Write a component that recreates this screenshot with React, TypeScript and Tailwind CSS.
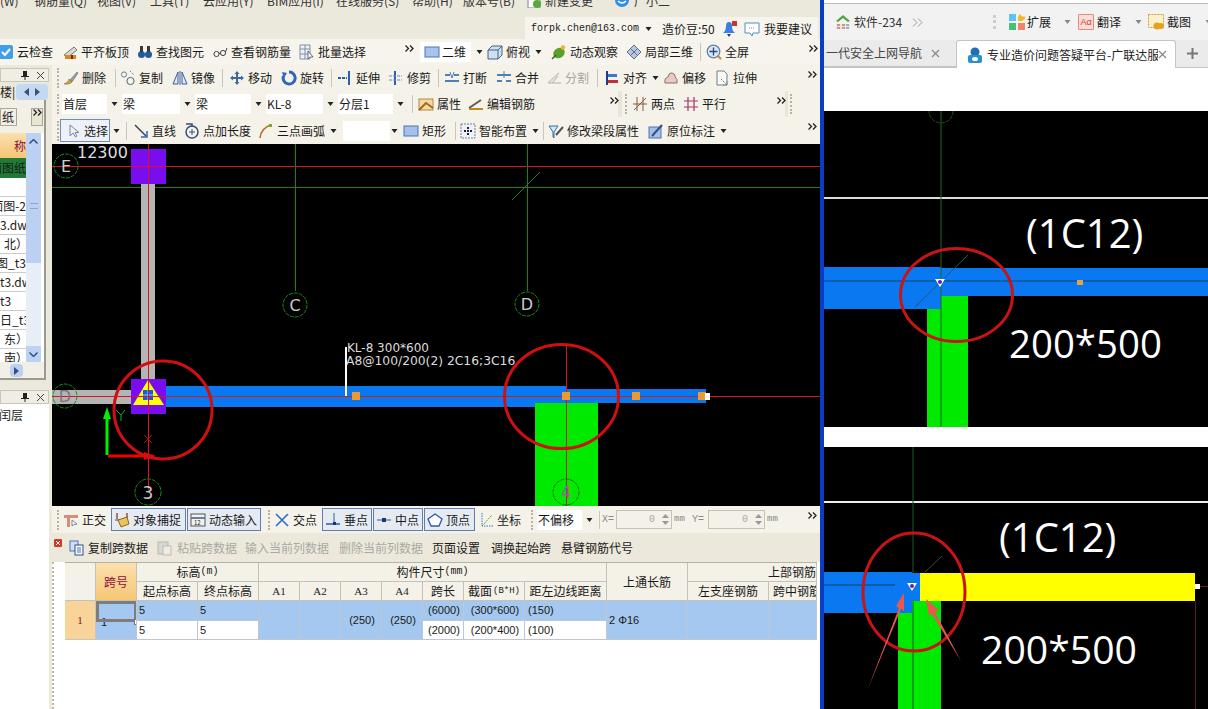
import type { ReactNode } from "react";
import clsx from "clsx";

type ToolProps = {
  icon?: ReactNode;
  label: string;
  className?: string;
  disabled?: boolean;
  caret?: boolean;
};

const Ico = ({ children }: { children: ReactNode }) => (
  <svg viewBox="0 0 16 16" className="h-4 w-4 shrink-0">
    {children}
  </svg>
);

const Caret = ({ className }: { className?: string }) => (
  <svg viewBox="0 0 7 4" className={clsx("h-[4px] w-[7px] shrink-0", className)}>
    <path d="M0.5 0 H6.5 L3.5 4 Z" fill="#222" />
  </svg>
);

const More = ({ className }: { className?: string }) => (
  <svg viewBox="0 0 9 7" className={clsx("mb-[8px] h-[7px] w-[9px] shrink-0", className)}>
    <path d="M0.5 0.5 L3.5 3.5 L0.5 6.5 M5 0.5 L8 3.5 L5 6.5" fill="none" stroke="#222" strokeWidth="1.3" />
  </svg>
);

const Grip = ({ className }: { className?: string }) => (
  <div className={clsx("h-[20px] w-[3px] shrink-0 border-l-[2px] border-dotted border-[#b5b3a6]", className)} />
);

const Sep = ({ className }: { className?: string }) => (
  <div className={clsx("h-[18px] w-px shrink-0 bg-[#c9c7b9]", className)} />
);

const Tool = ({ icon, label, className, disabled, caret }: ToolProps) => (
  <div className={clsx("flex shrink-0 items-center gap-[3px] whitespace-nowrap", disabled && "text-[#a9a9a2]", className)}>
    {icon}
    <span>{label}</span>
    {caret && <Caret className="ml-[2px]" />}
  </div>
);

const Snap = ({ icon, label, className }: ToolProps) => (
  <div className={clsx("flex h-[23px] shrink-0 items-center gap-[3px] border border-[#5d7fae] bg-[#e6ebf3] pl-[2px] whitespace-nowrap", className)}>
    {icon}
    <span>{label}</span>
  </div>
);

const Pick = ({ label, className }: { label: string; className: string }) => (
  <div className={clsx("flex h-[20px] shrink-0 items-center bg-white", className)}>
    <span className="flex-1 pl-[1px]">{label}</span>
    <div className="flex h-full w-[15px] items-center justify-center bg-[#f3f1e8]">
      <Caret />
    </div>
  </div>
);

const icons = {
  cloud: <Ico><rect x="1" y="1" width="14" height="14" rx="2" fill="#3f9fe8" /><path d="M4 8 L7 11 L12 5" fill="none" stroke="#fff" strokeWidth="2" /></Ico>,
  level: <Ico><path d="M2 11 L12 3 L15 6 L6 13 Z" fill="#d9d9d0" stroke="#777" /><rect x="3" y="11" width="11" height="4" fill="#d18a20" /><rect x="9" y="11" width="2" height="4" fill="#a01010" /></Ico>,
  find: <Ico><circle cx="4.5" cy="10.5" r="3.5" fill="#235a9c" /><circle cx="11.5" cy="10.5" r="3.5" fill="#235a9c" /><rect x="3" y="2" width="3" height="6" fill="#3a3a3a" /><rect x="10" y="2" width="3" height="6" fill="#3a3a3a" /></Ico>,
  glasses: <Ico><circle cx="4.5" cy="10" r="2.6" fill="none" stroke="#444" /><circle cx="11" cy="9" r="2.6" fill="none" stroke="#444" /><path d="M7 9.5 L8.5 9 M13.5 8 L15 4" stroke="#444" fill="none" /></Ico>,
  batch: <Ico><path d="M1 1 H11 V15 H1 Z M1 5 H11 M1 10 H11 M6 1 V15" fill="#eef2f8" stroke="#7f8fa8" /><path d="M9 7 V15 L11 13 L14 13 Z" fill="#fff" stroke="#667" /></Ico>,
  plane: <Ico><rect x="1" y="3" width="14" height="10" fill="#a9c4ec" stroke="#4d74b5" /></Ico>,
  cube: <Ico><path d="M1 6 L5 2 H15 V11 L11 15 H1 Z" fill="#cfe0f2" stroke="#48627f" /><path d="M1 6 H11 V15 M11 6 L15 2" fill="none" stroke="#48627f" /></Ico>,
  orbit: <Ico><ellipse cx="8" cy="9" rx="6" ry="5" fill="#5aa02c" transform="rotate(-35 8 9)" /><circle cx="12" cy="3.5" r="2.2" fill="#e9b52a" /><path d="M1 15 L5 11" stroke="#2f6a12" strokeWidth="1.5" /></Ico>,
  local: <Ico><path d="M8 1 L15 8 L8 15 L1 8 Z" fill="#b8c8dc" stroke="#5b6f8a" /><path d="M4.5 4.5 L11.5 11.5 M11.5 4.5 L4.5 11.5" stroke="#5b6f8a" /></Ico>,
  full: <Ico><circle cx="7.5" cy="7.5" r="6.3" fill="#d9e6f5" stroke="#6680a8" strokeWidth="1.3" /><path d="M7.5 3.5 V11.5 M3.5 7.5 H11.5" stroke="#27477a" strokeWidth="1.3" /><path d="M12 12 L15 15" stroke="#d0862d" strokeWidth="2" /></Ico>,
  del: <Ico><path d="M7 10 L14 2 L15 3 L9 12 Z" fill="#98a0ac" stroke="#555" strokeWidth=".5" /><path d="M1 14 Q5 13 6 9 L9 12 Q7 15 1 14 Z" fill="#caa24e" stroke="#7c5c1c" strokeWidth=".5" /></Ico>,
  copy: <Ico><circle cx="4" cy="4.5" r="2.6" fill="none" stroke="#6f8099" /><circle cx="10.5" cy="11" r="3.6" fill="none" stroke="#55657c" /><path d="M10 1 L14 5" stroke="#6f8099" strokeDasharray="1.5 1" /></Ico>,
  mirror: <Ico><path d="M6 2 L1 14 H6 Z M10 2 L15 14 H10 Z" fill="#dfe8f4" stroke="#3f5f9a" /><path d="M8 1 V15" stroke="#3f5f9a" /></Ico>,
  move: <Ico><path d="M8 1 L10.5 4 H9 V7 H12 V5.5 L15 8 L12 10.5 V9 H9 V12 H10.5 L8 15 L5.5 12 H7 V9 H4 V10.5 L1 8 L4 5.5 V7 H7 V4 H5.5 Z" fill="#3c6a9f" /></Ico>,
  rotate: <Ico><path d="M8 2 A6 6 0 1 1 2.5 6" fill="none" stroke="#2f66bd" strokeWidth="3" /><path d="M1 2 L6 3 L3 8 Z" fill="#2f66bd" /></Ico>,
  extend: <Ico><rect x="11" y="1" width="2" height="14" fill="#2f5fa8" /><path d="M1 8 H10" stroke="#2f5fa8" strokeWidth="2" strokeDasharray="3 1" /></Ico>,
  trim: <Ico><rect x="6" y="1" width="2" height="14" fill="#2f5fa8" /><path d="M1 6 H14 M1 10 H14" stroke="#6c8fbf" strokeDasharray="3 1" /></Ico>,
  breakI: <Ico><path d="M1 5 H6 M10 5 H15 M1 11 H15" stroke="#4d7fb8" strokeWidth="2" /><path d="M6 2 L8 8 M10 2 L8 8" stroke="#4d7fb8" /></Ico>,
  merge: <Ico><path d="M1 5 H15 M1 11 H6 M10 11 H15" stroke="#4d7fb8" strokeWidth="2" /><path d="M8 1 V8" stroke="#4d7fb8" /></Ico>,
  split: <Ico><path d="M2 13 H15 M2 13 L13 3 M6 13 L12 6" stroke="#c6c6bf" fill="none" strokeWidth="1.3" /></Ico>,
  align: <Ico><rect x="2" y="1" width="2" height="14" fill="#1d3d8c" /><rect x="4" y="4" width="9" height="3" fill="#3b78c9" /><rect x="4" y="10" width="10" height="3" fill="#c42d3a" /></Ico>,
  offset: <Ico><path d="M2 13 Q1 8 5 7 Q6 2 9 3 Q13 4 12 7 Q15 9 14 13 Z" fill="#f0c8c0" stroke="#777" /></Ico>,
  stretch: <Ico><path d="M3 1 H10 L13 4 V15 H3 Z" fill="#f8f8f4" stroke="#6c7c94" /><path d="M7 9 L13 15 M9 15 H13 V11" stroke="#6c7c94" fill="none" strokeDasharray="1.5 1" /></Ico>,
  prop: <Ico><rect x="1" y="3" width="14" height="11" fill="#f4d9a0" stroke="#b08a40" /><path d="M1 14 L8 7 L15 12" fill="none" stroke="#a06820" strokeWidth="2" /></Ico>,
  edit: <Ico><path d="M1 12 L13 4" stroke="#5d5d52" strokeWidth="2" /><path d="M1 13 H15" stroke="#c2861e" strokeWidth="2" /></Ico>,
  twoPt: <Ico><path d="M2 14 L14 2 M5 1 V15 M11 1 V15 M1 8 H15" stroke="#8a5a3a" fill="none" /></Ico>,
  parallel: <Ico><path d="M5 1 V15 M11 1 V15 M1 5 H15 M1 11 H15" stroke="#a0386a" fill="none" strokeWidth="1.2" /></Ico>,
  pointer: <Ico><path d="M4 2 V13 L7 10 L9.5 14 L11 13 L9 9.5 H13 Z" fill="#eef2f8" stroke="#7687a0" /></Ico>,
  line: <Ico><path d="M2 2 L13 13" stroke="#333f55" strokeWidth="1.4" /><path d="M8 14 H14 V8" fill="none" stroke="#2f66bd" strokeWidth="1.5" /></Ico>,
  length: <Ico><circle cx="8" cy="9" r="6" fill="none" stroke="#35507a" strokeWidth="1.5" /><path d="M5 9 H11 M8 6 V12" stroke="#35507a" /><path d="M2 1 H8 V4" fill="none" stroke="#35507a" strokeWidth="1.5" /></Ico>,
  arc: <Ico><path d="M2 15 Q3 5 13 2" fill="none" stroke="#b7692a" strokeWidth="1.5" /><rect x="11" y="1" width="3" height="3" fill="#7a2" /></Ico>,
  rect: <Ico><rect x="1" y="3" width="14" height="10" fill="#a6c0ea" stroke="#4d74b5" /></Ico>,
  smart: <Ico><rect x="1" y="1" width="14" height="14" fill="#eef2f8" stroke="#6f8099" strokeDasharray="2 1" /><path d="M8 4 V12 M4 8 H12" stroke="#223" strokeWidth="2" strokeDasharray="2 1" /></Ico>,
  beam: <Ico><path d="M1 3 H10 L6 9 V15 L5 14 V9 Z" fill="#cfe8f4" stroke="#2f6fa0" /><path d="M8 12 L15 4" stroke="#555" strokeWidth="2" /></Ico>,
  note: <Ico><rect x="1" y="4" width="12" height="11" fill="#a8bfe4" stroke="#4d74b5" /><path d="M4 13 L14 2" stroke="#2d4f8a" strokeWidth="2" /></Ico>,
  ortho: <Ico><path d="M1 3 H15 V6 H7 V15 H4 V6 H1 Z" fill="#d98a78" /><path d="M9 8 V14 L11 12.5 L14 12 Z" fill="#fff" stroke="#789" /></Ico>,
  snap: <Ico><path d="M3 1 V7 M13 1 V7" stroke="#8a3a2a" strokeWidth="1.3" /><path d="M4 8 L13 5 L15 12 L7 15 Z" fill="#e8c45c" stroke="#8a6a18" /><path d="M1 8 H5" stroke="#555" /></Ico>,
  input: <Ico><rect x="1" y="2" width="14" height="12" fill="#f2f2ea" stroke="#555" /><path d="M1 6 H15" stroke="#6a7f9f" strokeWidth="2" /><text x="4" y="13" fontSize="6" fill="#222">12</text></Ico>,
  cross: <Ico><path d="M2 2 L14 14 M14 2 L2 14" stroke="#2c6fc4" strokeWidth="1.6" /></Ico>,
  perp: <Ico><path d="M1 12 H15" stroke="#2c5aa8" strokeWidth="1.5" /><path d="M9 1 V12" stroke="#2c5aa8" /><rect x="8" y="10" width="3" height="3" fill="#14386f" /></Ico>,
  mid: <Ico><path d="M1 8 H15" stroke="#2c5aa8" /><rect x="6" y="6" width="4" height="4" fill="#14386f" /></Ico>,
  vertex: <Ico><path d="M8 2 L15 7 L12 14 H4 L1 7 Z" fill="#fff" stroke="#2c5aa8" strokeWidth="1.3" /></Ico>,
  coord: <Ico><path d="M4 1 V14 H15" stroke="#2c7fc4" strokeDasharray="1.5 1" fill="none" /><path d="M4 14 L14 3" stroke="#5aa02c" strokeDasharray="2 1" /></Ico>,
  copyData: <Ico><rect x="1" y="1" width="8" height="10" fill="#cfe0f4" stroke="#4d74b5" /><rect x="6" y="5" width="8" height="10" fill="#f6f8fc" stroke="#2f4f8a" /><path d="M8 8 H12 M8 10 H12 M8 12 H12" stroke="#4d74b5" /></Ico>,
  pasteData: <Ico><rect x="2" y="2" width="10" height="12" fill="#d8d8d2" stroke="#b8b8b0" /><rect x="7" y="6" width="8" height="9" fill="#ecece6" stroke="#bcbcb4" /></Ico>,
};

const Canvas = () => (
  <svg viewBox="52 144 768 362" className="block h-[362px] w-[768px] bg-black font-['DejaVu_Sans',sans-serif]">
    <path d="M52 187.5 H820 M295.5 144 V291 M527.5 144 V291 M512 200 L540 172" stroke="#0f8a0f" fill="none" />
    <rect x="141" y="184" width="14" height="196" fill="#b5b5b5" />
    <rect x="52" y="390" width="80" height="14" fill="#b5b5b5" />
    <rect x="166" y="386" width="400" height="21" fill="#0a78f0" />
    <rect x="566" y="389" width="140" height="14" fill="#0a78f0" />
    <rect x="535" y="403" width="63" height="103" fill="#00ea00" />
    <rect x="131" y="149" width="35" height="35" fill="#7a0df0" />
    <rect x="131" y="379" width="35" height="35" fill="#7a0df0" />
    <path d="M148 380 L164 405 H133 Z" fill="#ffff00" />
    <rect x="143" y="390" width="10" height="10" fill="#0a5ff0" />
    <path d="M148 390 V400 M143 395 H153" stroke="#fff" strokeWidth=".6" />
    <path d="M52 166.5 H820 M52 396.5 H820 M148.5 144 V490 M566.5 344 V506" stroke="#d41818" fill="none" />
    <rect x="345" y="347" width="2" height="49" fill="#fff" />
    {[356, 566, 636, 702].map((x) => (
      <rect key={x} x={x - 4} y="392" width="8" height="8" fill="#ea9a30" />
    ))}
    <rect x="705" y="393" width="5" height="7" fill="#fff" />
    <circle cx="66" cy="166" r="12" fill="none" stroke="#1c8a1c" strokeDasharray="4 1" />
    <circle cx="65" cy="396" r="12" fill="none" stroke="#1c8a1c" strokeDasharray="4 1" />
    <circle cx="295" cy="305" r="12" fill="none" stroke="#1c8a1c" strokeDasharray="4 1" />
    <circle cx="527" cy="304" r="12" fill="none" stroke="#1c8a1c" strokeDasharray="4 1" />
    <circle cx="148" cy="492" r="13" fill="none" stroke="#1c8a1c" strokeDasharray="4 1" />
    <circle cx="566" cy="492" r="13" fill="none" stroke="#0d700d" strokeDasharray="4 1" />
    <text x="66" y="172" textAnchor="middle" fontSize="16" fill="#ccc">E</text>
    <text x="65" y="402" textAnchor="middle" fontSize="16" fill="#777">D</text>
    <text x="295" y="311" textAnchor="middle" fontSize="16" fill="#ccc">C</text>
    <text x="527" y="310" textAnchor="middle" fontSize="16" fill="#ccc">D</text>
    <text x="148" y="499" textAnchor="middle" fontSize="17" fill="#ccc">3</text>
    <text x="566" y="498" textAnchor="middle" fontSize="16" fill="#9a5ca0">4</text>
    <text x="77" y="158" fontSize="16" fill="#ddd">12300</text>
    <text x="347" y="352" fontSize="12" fill="#ddd">KL-8 300*600</text>
    <text x="346" y="365" fontSize="12.3" fill="#ddd">A8@100/200(2) 2C16;3C16</text>
    <path d="M107 455 V418" stroke="#00f000" strokeWidth="3" />
    <path d="M107 407 L111 419 H103 Z" fill="#00f000" />
    <path d="M116 410 L121 415 L125 410 M121 415 V421" stroke="#10b010" fill="none" />
    <path d="M108 456 H146" stroke="#f00000" strokeWidth="3" />
    <path d="M156 456 L144 452 V460 Z" fill="#f00000" />
    <path d="M144 435 L152 443 M152 435 L144 443" stroke="#b01010" />
    <circle cx="163" cy="410" r="49" fill="none" stroke="#d01010" strokeWidth="3" />
    <ellipse cx="561.5" cy="396.5" rx="57" ry="52" fill="none" stroke="#d01010" strokeWidth="3" />
  </svg>
);

const ShotOne = () => (
  <svg viewBox="824 111 384 316" className="block h-[316px] w-[384px] bg-black">
    <rect x="824" y="197" width="384" height="2" fill="#ddd" />
    <rect x="824" y="267" width="117" height="42" fill="#0a78f0" />
    <rect x="940" y="268" width="268" height="28" fill="#0a78f0" />
    <rect x="927" y="309" width="14" height="118" fill="#00ea00" />
    <rect x="941" y="296" width="27" height="131" fill="#00ea00" />
    <path d="M941 111 V427" stroke="#1c6a2c" />
    <path d="M824 281 H1208" stroke="#15406a" />
    <path d="M968 255 L915 307" stroke="#1c5a6a" />
    <circle cx="941" cy="111" r="12" fill="none" stroke="#145a14" strokeDasharray="4 1" />
    <path d="M935 279 H945 L940 287 Z" fill="#fff" />
    <circle cx="940" cy="282" r="2" fill="#5a20c0" />
    <rect x="1077" y="280" width="6" height="5" fill="#e8a040" />
    <ellipse cx="956.5" cy="295" rx="56" ry="46.5" fill="none" stroke="#c81414" strokeWidth="3" />
    <g className="font-['Open_Sans',sans-serif]" fill="#fff">
      <text x="1026" y="248" fontSize="40">(1C12)</text>
      <text x="1009" y="358" fontSize="38.4">200*500</text>
    </g>
  </svg>
);

const ShotTwo = () => (
  <svg viewBox="824 447 384 262" className="block h-[262px] w-[384px] bg-black">
    <rect x="824" y="501" width="384" height="2" fill="#eee" />
    <rect x="824" y="572" width="88" height="41" fill="#0a78f0" />
    <rect x="912" y="573" width="8" height="28" fill="#0a78f0" />
    <rect x="920" y="573" width="275" height="28" fill="#ffff00" />
    <rect x="898" y="613" width="14" height="96" fill="#00ea00" />
    <rect x="912" y="601" width="29" height="108" fill="#00ea00" />
    <path d="M913 447 V573 M913 601 V709" stroke="#1c5a2c" />
    <path d="M824 585 H895" stroke="#15406a" />
    <path d="M942 556 L925 572" stroke="#3a4a3a" />
    <path d="M907 583 H917 L912 591 Z" fill="#fff" />
    <circle cx="912" cy="586" r="2" fill="#5a20c0" />
    <rect x="1195" y="584" width="5" height="5" fill="#fff" />
    <path d="M1200 586.5 H1208 M1195.5 601 V709" stroke="#5a2418" />
    <ellipse cx="914" cy="592" rx="51" ry="59" fill="none" stroke="#c81414" strokeWidth="3" />
    <path d="M867 691 L899 608 L896 606 L904 593 L904 611 L901 609 Z" fill="#e8584e" />
    <path d="M961 661 L932 614 L929 616 L926 599 L939 610 L935 612 Z" fill="#e8584e" />
    <g className="font-['Open_Sans',sans-serif]" fill="#fff">
      <text x="999" y="552" fontSize="40">(1C12)</text>
      <text x="981" y="664" fontSize="39.2">200*500</text>
    </g>
  </svg>
);

const LeftPanel = () => (
  <div className="flex h-full w-[52px] shrink-0 flex-col">
    <div className="mt-[3px] flex h-[14px] w-[49px] items-center justify-end gap-[7px] border border-[#c9c7b9] bg-[#f0eee4] pr-[3px] text-[10px]">
      <svg viewBox="0 0 8 9" className="h-[9px] w-[8px]"><path d="M2 0 H6 V5 H8 V6 H4.5 V9 H3.5 V6 H0 V5 H2 Z" fill="#222" /></svg>
      <svg viewBox="0 0 9 9" className="h-[9px] w-[9px]"><path d="M1 1 L8 8 M8 1 L1 8" stroke="#444" /></svg>
    </div>
    <div className="mt-[2px] flex h-[16px] w-[48px] items-center overflow-hidden">
      <span className="w-[16px] shrink-0">楼|</span>
      <div className="flex h-full flex-1 items-center justify-center gap-[6px] rounded-sm bg-[#c4d8f4]">
        <svg viewBox="0 0 5 8" className="h-[8px] w-[5px]"><path d="M5 0 V8 L0 4 Z" fill="#38507a" /></svg>
        <svg viewBox="0 0 5 8" className="h-[8px] w-[5px]"><path d="M0 0 V8 L5 4 Z" fill="#38507a" /></svg>
      </div>
    </div>
    <div className="flex h-[280px] w-[46px] flex-col overflow-hidden border-r-2 border-b-2 border-[#9c9a8e] bg-[#f1efe6]">
      <div className="flex h-[33px] shrink-0 items-center justify-between pr-[1px]">
        <div className="flex h-[18px] w-[17px] items-center overflow-hidden border border-[#aaa89a] pl-[1px]">纸</div>
        <div className="flex h-[18px] w-[12px] items-center justify-center border border-[#aaa89a] bg-[#e8e4d2]">
          <More className="mb-0" />
        </div>
      </div>
      <div className="flex h-[229px] shrink-0 bg-white">
        <div className="w-[26px] shrink-0 overflow-hidden whitespace-nowrap">
          <div className="flex h-[25px] items-center justify-end bg-gradient-to-b from-[#fbe0ac] to-[#f6c674] text-[#8a1040]">称</div>
          <div className="flex h-[20px] items-center justify-end bg-[#1f7a34]">面图纸</div>
          <div className="h-[19px] border-b border-[#ccc]" />
          {["面图-2", "3.dwg", "北）", "图_t3", "t3.dw", "t3", "日_t3", "东）", "南）"].map((row, index) => (
            <div
              key={row}
              className={clsx(
                "flex h-[19px] items-center border-b border-[#ccc]",
                index === 0 || index === 3 ? "justify-end" : "justify-start",
                (index === 2 || index === 7 || index === 8) && "pl-[4px]",
              )}
            >
              {row}
            </div>
          ))}
        </div>
        <div className="flex w-[15px] shrink-0 flex-col bg-[#e8eef8]">
          <div className="flex h-[16px] items-center justify-center bg-[#bdd2f2]">
            <svg viewBox="0 0 9 5" className="h-[5px] w-[9px]"><path d="M0.5 4.5 L4.5 0.5 L8.5 4.5" fill="none" stroke="#2d4f8a" strokeWidth="1.5" /></svg>
          </div>
          <div className="flex h-[114px] items-center justify-center bg-[#bcd0f2]">
            <div className="h-[6px] w-[8px] border-y border-[#8fa6cc]" />
          </div>
          <div className="flex-1" />
          <div className="flex h-[16px] items-center justify-center bg-[#bdd2f2]">
            <svg viewBox="0 0 9 5" className="h-[5px] w-[9px]"><path d="M0.5 0.5 L4.5 4.5 L8.5 0.5" fill="none" stroke="#2d4f8a" strokeWidth="1.5" /></svg>
          </div>
        </div>
      </div>
      <div className="mt-[2px] ml-[10px] flex h-[13px] w-[13px] items-center justify-center rounded-sm bg-[#bcd0f2]">
        <svg viewBox="0 0 5 8" className="h-[8px] w-[5px]"><path d="M0 0 V8 L5 4 Z" fill="#38507a" /></svg>
      </div>
    </div>
    <div className="mt-[10px] flex h-[14px] w-[49px] shrink-0 items-center justify-end gap-[7px] border border-[#c9c7b9] bg-[#f0eee4] pr-[3px]">
      <svg viewBox="0 0 8 9" className="h-[9px] w-[8px]"><path d="M2 0 H6 V5 H8 V6 H4.5 V9 H3.5 V6 H0 V5 H2 Z" fill="#222" /></svg>
      <svg viewBox="0 0 9 9" className="h-[9px] w-[9px]"><path d="M1 1 L8 8 M8 1 L1 8" stroke="#444" /></svg>
    </div>
    <div className="flex w-[49px] flex-1 justify-start bg-white pt-[5px] whitespace-nowrap">
      <span className="-ml-[1px]">闰层</span>
    </div>
  </div>
);

const Head = ({ children, className }: { children?: ReactNode; className?: string }) => (
  <div className={clsx("flex items-center justify-center overflow-hidden border-r border-b border-[#c4c2b6] bg-[#f3f1e8] whitespace-nowrap", className)}>
    {children}
  </div>
);

const Cell = ({ children, className }: { children?: ReactNode; className?: string }) => (
  <div className={clsx("flex items-center overflow-hidden border-r border-b border-[#c0c6cf] bg-[#a5c8f0] pl-[2px] font-['Liberation_Sans',sans-serif] text-[11px] whitespace-nowrap", className)}>
    {children}
  </div>
);

const SteelTable = () => (
  <div className="ml-[11px] grid w-[752px] grid-cols-[31px_41px_61px_61px_41px_41px_41px_41px_41px_61px_82px_81px_81px_48px] grid-rows-[19px_19px_20px_19px] overflow-hidden border-t border-[#b5b3a6]">
    <Head className="col-start-1 row-span-2 row-start-1" />
    <Head className="col-start-2 row-span-2 row-start-1 bg-gradient-to-b from-[#fbe0ac] to-[#f6c674] text-[#8a1040]">跨号</Head>
    <Head className="col-span-2 col-start-3 row-start-1">
      标高<span className="font-['Liberation_Mono',monospace] text-[10px]">(m)</span>
    </Head>
    <Head className="col-span-7 col-start-5 row-start-1">
      构件尺寸<span className="font-['Liberation_Mono',monospace] text-[10px]">(mm)</span>
    </Head>
    <Head className="col-start-12 row-span-2 row-start-1">上通长筋</Head>
    <Head className="col-span-2 col-start-13 row-start-1 justify-end">上部钢筋</Head>
    <Head className="col-start-3 row-start-2">起点标高</Head>
    <Head className="col-start-4 row-start-2">终点标高</Head>
    {["A1", "A2", "A3", "A4"].map((name) => (
      <Head key={name} className="row-start-2 font-['Liberation_Serif',serif] text-[11px]">{name}</Head>
    ))}
    <Head className="row-start-2">跨长</Head>
    <Head className="row-start-2">
      截面<span className="ml-[1px] font-['Liberation_Mono',monospace] text-[9px]">(B*H)</span>
    </Head>
    <Head className="row-start-2">距左边线距离</Head>
    <Head className="col-start-13 row-start-2">左支座钢筋</Head>
    <Head className="col-start-14 row-start-2 justify-start pl-[4px]">跨中钢筋</Head>

    <div className="col-start-1 row-span-2 row-start-3 flex items-center justify-center border-r border-b border-[#c8c6ba] bg-[#f8d39a] font-['Liberation_Serif',serif] text-[11px] text-[#8a1010]">1</div>
    <Cell className="relative col-start-2 row-span-2 row-start-3 pl-0">
      <div className="absolute top-0 left-0 h-[21px] w-[41px] border-[3px] border-[#7d7d7d]" />
      <div className="absolute top-[18px] left-[38px] h-[6px] w-[6px] border border-[#777] bg-white" />
      <span className="mt-[4px] ml-[3px]">1</span>
    </Cell>
    <Cell className="col-start-3 row-start-3">5</Cell>
    <Cell className="col-start-4 row-start-3">5</Cell>
    <Cell className="col-start-5 row-span-2 row-start-3" />
    <Cell className="col-start-6 row-span-2 row-start-3" />
    <Cell className="col-start-7 row-span-2 row-start-3 justify-center pl-0">(250)</Cell>
    <Cell className="col-start-8 row-span-2 row-start-3 justify-center pl-0">(250)</Cell>
    <Cell className="col-start-9 row-start-3 justify-center pl-0">(6000)</Cell>
    <Cell className="col-start-10 row-start-3 justify-center pl-0">(300*600)</Cell>
    <Cell className="col-start-11 row-start-3 pl-[3px]">(150)</Cell>
    <Cell className="col-start-12 row-span-2 row-start-3 pl-[2px]">2 Φ16</Cell>
    <Cell className="col-start-13 row-span-2 row-start-3" />
    <Cell className="col-start-14 row-span-2 row-start-3" />
    <Cell className="col-start-3 row-start-4 bg-white">5</Cell>
    <Cell className="col-start-4 row-start-4 bg-white">5</Cell>
    <Cell className="col-start-9 row-start-4 justify-center bg-white pl-0">(2000)</Cell>
    <Cell className="col-start-10 row-start-4 justify-center bg-white pl-0">(200*400)</Cell>
    <Cell className="col-start-11 row-start-4 bg-white pl-[3px]">(100)</Cell>
  </div>
);

const Spin = ({ className }: { className: string }) => (
  <div className={clsx("flex h-[19px] shrink-0 items-center justify-end border border-[#c5c3b5] bg-[#f3f1e8] text-[#aaa]", className)}>
    <span className="pr-[4px] font-['Liberation_Mono',monospace] text-[10px]">0</span>
    <div className="flex w-[12px] flex-col items-center gap-[3px]">
      <svg viewBox="0 0 7 4" className="h-[4px] w-[7px]"><path d="M3.5 0 L7 4 H0 Z" fill="#999" /></svg>
      <svg viewBox="0 0 7 4" className="h-[4px] w-[7px]"><path d="M0 0 H7 L3.5 4 Z" fill="#999" /></svg>
    </div>
  </div>
);

const Browser = () => (
  <div className="flex w-[384px] shrink-0 flex-col overflow-hidden bg-white">
    <div className="h-[4px] shrink-0 border-b border-[#bbb] bg-white" />
    <div className="flex h-[36px] shrink-0 items-center bg-[#f2f2f2] pl-[11px] whitespace-nowrap">
      <div className="flex w-[77px] shrink-0 items-center gap-[3px]">
        <svg viewBox="0 0 16 16" className="h-4 w-4 shrink-0">
          <path d="M1 7 L8 1 L15 7 L13 8 L8 4 L3 8 Z" fill="#4fa33c" />
          <rect x="1" y="10" width="14" height="5" fill="#e8e8e0" />
          <path d="M2 11 H5 M2 14 H5 M7 11 H10 M7 14 H10" stroke="#d03030" />
          <path d="M11 11 H14 M11 14 H14" stroke="#2f7fd0" />
        </svg>
        <span className="text-[#333]">软件-234</span>
      </div>
      <svg viewBox="0 0 11 9" className="h-[9px] w-[11px] shrink-0"><path d="M1 0.5 L5 4.5 L1 8.5 M6 0.5 L10 4.5 L6 8.5" fill="none" stroke="#999" /></svg>
      <div className="ml-[70px] h-[14px] w-[3px] shrink-0 border-l-[3px] border-dotted border-[#ccc]" />
      <div className="ml-[13px] flex w-[69px] shrink-0 items-center gap-[2px]">
        <svg viewBox="0 0 16 16" className="h-4 w-4 shrink-0">
          <rect x="0" y="0" width="7" height="7" fill="#5cc6f0" />
          <path d="M11 0 L13 2.5 H16 V5 L13 7 H9 V3 Z" fill="#f0b82a" />
          <rect x="0" y="9" width="7" height="7" fill="#48c078" />
          <rect x="9" y="9" width="7" height="7" fill="#f0846c" />
        </svg>
        <span>扩展</span>
        <Caret className="ml-[11px] opacity-50" />
      </div>
      <div className="flex w-[70px] shrink-0 items-center gap-[3px]">
        <div className="flex h-4 w-4 shrink-0 items-center justify-center rounded-[1px] border border-[#e08a80] bg-[#fbdcd8] font-['Liberation_Sans',sans-serif] text-[9px] text-[#d04030]">Aα</div>
        <span>翻译</span>
        <Caret className="ml-[11px] opacity-50" />
      </div>
      <div className="flex shrink-0 items-center gap-[3px]">
        <svg viewBox="0 0 16 16" className="h-4 w-4 shrink-0">
          <rect x="0.5" y="0.5" width="15" height="13" fill="#fdf0c8" stroke="#d0a040" strokeDasharray="2 1" />
          <circle cx="9" cy="12" r="3.5" fill="#e8a020" />
          <circle cx="13" cy="12" r="3" fill="#e8a020" />
        </svg>
        <span>截图</span>
        <Caret className="ml-[11px] opacity-50" />
      </div>
    </div>
    <div className="flex h-[28px] shrink-0 items-end border-b border-[#c4c4c4] bg-[#ebebeb]">
      <div className="flex h-[27px] w-[132px] shrink-0 items-center overflow-hidden border-b border-[#c4c4c4] text-[#444]">
        <span className="w-[107px] shrink-0 pl-[2px] whitespace-nowrap">一代安全上网导航</span>
        <svg viewBox="0 0 9 9" className="h-[9px] w-[9px]"><path d="M1 1 L8 8 M8 1 L1 8" stroke="#888" strokeWidth="1.2" /></svg>
      </div>
      <div className="-mb-px flex h-[28px] w-[220px] shrink-0 items-center rounded-t-[3px] border border-b-0 border-[#c4c4c4] bg-white pl-[10px]">
        <svg viewBox="0 0 16 16" className="h-4 w-4 shrink-0">
          <circle cx="8" cy="5" r="4.5" fill="#1f6fb5" />
          <rect x="1" y="8" width="14" height="8" rx="2" fill="#2a8fd0" />
          <ellipse cx="8" cy="12" rx="3" ry="2" fill="#fff" />
        </svg>
        <span className="ml-[4px] w-[171px] shrink-0 overflow-hidden text-[#222] whitespace-nowrap">专业造价问题答疑平台-广联达服务</span>
        <svg viewBox="0 0 9 9" className="h-[9px] w-[9px] shrink-0"><path d="M1 1 L8 8 M8 1 L1 8" stroke="#888" strokeWidth="1.2" /></svg>
      </div>
      <div className="flex h-[27px] flex-1 items-center justify-center">
        <svg viewBox="0 0 11 11" className="h-[11px] w-[11px]"><path d="M5.5 0 V11 M0 5.5 H11" stroke="#777" strokeWidth="2" /></svg>
      </div>
    </div>
    <div className="h-[43px] shrink-0 bg-white" />
    <ShotOne />
    <div className="h-[20px] shrink-0 bg-white" />
    <ShotTwo />
  </div>
);

const App = () => (
  <div className="flex h-[709px] w-[1208px] overflow-hidden bg-[#ebe8dc] font-['Noto_Sans_CJK_SC','Noto_Sans',sans-serif] text-[12px] leading-none text-[#1a1a1a]">
    <div className="flex w-[820px] shrink-0 flex-col">
      <div className="relative h-[8px] shrink-0 overflow-hidden">
        <div className="-mt-[7px] flex items-center whitespace-nowrap text-[#333]">
          <span className="w-[34px] shrink-0">(W)</span>
          <span className="w-[63px] shrink-0">钢筋量(Q)</span>
          <span className="w-[53px] shrink-0">视图(V)</span>
          <span className="w-[53px] shrink-0">工具(T)</span>
          <span className="w-[64px] shrink-0">云应用(Y)</span>
          <span className="w-[69px] shrink-0">BIM应用(I)</span>
          <span className="w-[76px] shrink-0">在线服务(S)</span>
          <span className="w-[51px] shrink-0">帮助(H)</span>
          <span className="w-[64px] shrink-0">版本号(B)</span>
          <div className="flex w-[87px] shrink-0 items-center gap-[2px]">
            <Ico>
              <rect x="1" y="1" width="12" height="14" fill="#fff" stroke="#789" />
              <circle cx="10" cy="11" r="4" fill="#5aa83c" />
            </Ico>
            <span>新建变更</span>
          </div>
          <div className="flex shrink-0 items-center gap-[4px]">
            <Ico>
              <circle cx="8" cy="7" r="7" fill="#2f8fe8" />
              <path d="M4 8 Q8 12 12 8" fill="none" stroke="#fff" strokeWidth="1.5" />
            </Ico>
            <span>广小二</span>
          </div>
        </div>
      </div>
      <div className="flex h-[31px] shrink-0 items-end justify-end pr-[2px]">
        <div className="-mb-px flex h-[23px] w-[293px] shrink-0 items-center bg-[#f6f4ec] pl-[6px] whitespace-nowrap">
          <span className="w-[114px] shrink-0 font-['Liberation_Mono',monospace] text-[10px]">forpk.chen@163.com</span>
          <Caret />
          <span className="ml-[4px] w-[65px] shrink-0 pl-[6px]">造价豆:50</span>
          <svg viewBox="0 0 16 16" className="h-4 w-4 shrink-0">
            <path d="M2 12 Q5 10 5 5 Q5 1 8 1 Q11 1 11 5 Q11 10 14 12 Z" fill="#3a7fe0" />
            <path d="M6 13 H10 L8 16 Z" fill="#1c3f80" />
            <rect x="11" y="0" width="5" height="5" fill="#d03030" />
          </svg>
          <svg viewBox="0 0 16 16" className="ml-[7px] h-4 w-4 shrink-0">
            <path d="M1 2 H15 V12 H9 L8 15 L6 12 H1 Z" fill="#fff" stroke="#4d8fd0" />
            <path d="M5 7 H11" stroke="#88a" strokeDasharray="1 1" />
          </svg>
          <span className="ml-[4px]">我要建议</span>
        </div>
      </div>
      <div className="flex h-[26px] shrink-0 items-center bg-[#f6f4ec]">
        <Tool icon={icons.cloud} label="云检查" className="-ml-[2px] w-[64px]" />
        <Tool icon={icons.level} label="平齐板顶" className="w-[75px]" />
        <Tool icon={icons.find} label="查找图元" className="w-[75px]" />
        <Tool icon={icons.glasses} label="查看钢筋量" className="w-[87px]" />
        <Tool icon={icons.batch} label="批量选择" className="w-[106px]" />
        <More className="w-[8px]" />
        <div className="ml-[6px] flex h-[20px] w-[51px] shrink-0 items-center gap-[2px] bg-white pl-[4px]">
          {icons.plane}
          <span>二维</span>
        </div>
        <Caret className="mr-[4px] ml-[5px]" />
        <Tool icon={icons.cube} label="俯视" className="w-[64px]" caret />
        <Tool icon={icons.orbit} label="动态观察" className="w-[75px]" />
        <Tool icon={icons.local} label="局部三维" className="w-[74px]" />
        <Sep className="mr-[5px]" />
        <Tool icon={icons.full} label="全屏" className="w-[103px]" />
        <More />
      </div>
      <div className="flex min-h-0 flex-1">
        <LeftPanel />
        <div className="flex w-[768px] shrink-0 flex-col">
          <div className="flex h-[26px] shrink-0 items-center bg-[#f4f2e9] pl-[5px]">
            <Grip className="mr-[3px]" />
            <Tool icon={icons.del} label="删除" className="w-[52px]" />
            <Sep className="mr-[4px]" />
            <Tool icon={icons.copy} label="复制" className="w-[52px]" />
            <Tool icon={icons.mirror} label="镜像" className="w-[50px]" />
            <Sep className="mr-[6px]" />
            <Tool icon={icons.move} label="移动" className="w-[52px]" />
            <Tool icon={icons.rotate} label="旋转" className="w-[50px]" />
            <Sep className="mr-[5px]" />
            <Tool icon={icons.extend} label="延伸" className="w-[51px]" />
            <Tool icon={icons.trim} label="修剪" className="w-[50px]" />
            <Sep className="mr-[5px]" />
            <Tool icon={icons.breakI} label="打断" className="w-[52px]" />
            <Tool icon={icons.merge} label="合并" className="w-[50px]" />
            <Tool icon={icons.split} label="分割" className="w-[51px]" disabled />
            <Sep className="mr-[6px]" />
            <Tool icon={icons.align} label="对齐" className="w-[59px]" caret />
            <Tool icon={icons.offset} label="偏移" className="w-[51px]" />
            <Tool icon={icons.stretch} label="拉伸" className="w-[94px]" />
            <More />
          </div>
          <div className="flex h-[26px] shrink-0 items-stretch bg-[#e8e5d8]">
            <div className="flex w-[566px] shrink-0 items-center bg-[#f4f2e9] pl-[5px]">
              <Grip className="mr-[2px]" />
              <Pick label="首层" className="w-[60px]" />
              <Pick label="梁" className="w-[73px]" />
              <Pick label="梁" className="w-[71px]" />
              <Pick label="KL-8" className="w-[72px]" />
              <Pick label="分层1" className="w-[70px]" />
              <Sep className="mr-[5px] ml-[4px]" />
              <Tool icon={icons.prop} label="属性" className="w-[50px]" />
              <Tool icon={icons.edit} label="编辑钢筋" className="w-[142px]" />
              <More className="w-[8px]" />
            </div>
            <div className="ml-[4px] flex w-[163px] shrink-0 items-center bg-[#f4f2e9] pl-[3px]">
              <Grip className="mr-[4px]" />
              <Tool icon={icons.twoPt} label="两点" className="w-[51px]" />
              <Tool icon={icons.parallel} label="平行" className="w-[94px]" />
              <More className="w-[8px]" />
            </div>
            <div className="ml-[3px] flex flex-1 items-center bg-[#f4f2e9] pl-[2px]">
              <Grip />
            </div>
          </div>
          <div className="flex h-[27px] shrink-0 items-center bg-[#f4f2e9] pl-[5px]">
            <Grip />
            <div className="flex h-[23px] w-[50px] shrink-0 items-center gap-[2px] border border-[#6c8cba] bg-[#eef2f8] pl-[5px]">
              {icons.pointer}
              <span>选择</span>
            </div>
            <Caret className="mr-[6px] ml-[3px]" />
            <Sep className="mr-[6px]" />
            <Tool icon={icons.line} label="直线" className="w-[51px]" />
            <Tool icon={icons.length} label="点加长度" className="w-[74px]" />
            <Tool icon={icons.arc} label="三点画弧" className="w-[85px]" caret />
            <div className="flex h-[20px] w-[47px] shrink-0 bg-white" />
            <div className="flex w-[13px] shrink-0 justify-start pl-[1px]">
              <Caret />
            </div>
            <Tool icon={icons.rect} label="矩形" className="w-[52px]" />
            <Sep className="mr-[4px]" />
            <Tool icon={icons.smart} label="智能布置" className="w-[83px]" caret />
            <Sep className="mr-[4px]" />
            <Tool icon={icons.beam} label="修改梁段属性" className="w-[100px]" />
            <Tool icon={icons.note} label="原位标注" className="w-[160px]" caret />
            <More />
          </div>
          <Canvas />
          <div className="flex h-[27px] shrink-0 items-center bg-[#f4f2e9] pl-[5px]">
            <Grip className="mr-[3px]" />
            <Tool icon={icons.ortho} label="正交" className="w-[48px]" />
            <Snap icon={icons.snap} label="对象捕捉" className="w-[75px]" />
            <Snap icon={icons.input} label="动态输入" className="ml-[1px] w-[74px]" />
            <Grip className="mr-[3px] ml-[7px]" />
            <Tool icon={icons.cross} label="交点" className="w-[48px]" />
            <Snap icon={icons.perp} label="垂点" className="w-[50px]" />
            <Snap icon={icons.mid} label="中点" className="ml-[1px] w-[50px]" />
            <Snap icon={icons.vertex} label="顶点" className="ml-[1px] w-[51px]" />
            <Tool icon={icons.coord} label="坐标" className="ml-[3px] w-[53px]" />
            <Grip className="mr-[3px]" />
            <Pick label="不偏移" className="w-[60px]" />
            <Sep className="mx-[2px]" />
            <span className="w-[14px] shrink-0 font-['Liberation_Mono',monospace] text-[10px] text-[#888]">X=</span>
            <Spin className="w-[56px]" />
            <span className="ml-[2px] w-[18px] shrink-0 font-['Liberation_Mono',monospace] text-[9px] text-[#888]">mm</span>
            <span className="w-[16px] shrink-0 font-['Liberation_Mono',monospace] text-[10px] text-[#888]">Y=</span>
            <Spin className="w-[57px]" />
            <span className="ml-[2px] w-[41px] shrink-0 font-['Liberation_Mono',monospace] text-[9px] text-[#888]">mm</span>
            <More />
          </div>
          <div className="flex h-[29px] shrink-0 items-center bg-[#ece9dc]">
            <svg viewBox="0 0 8 8" className="mb-[10px] ml-[2px] h-[8px] w-[8px] shrink-0">
              <rect width="8" height="8" rx="1" fill="#d03828" />
              <path d="M2 2 L6 6 M6 2 L2 6" stroke="#fff" />
            </svg>
            <Tool icon={icons.copyData} label="复制跨数据" className="ml-[7px] w-[87px]" />
            <Tool icon={icons.pasteData} label="粘贴跨数据" className="w-[89px] gap-[5px]" disabled />
            <Tool label="输入当前列数据" className="w-[94px]" disabled />
            <Tool label="删除当前列数据" className="w-[93px]" disabled />
            <Tool label="页面设置" className="w-[59px]" />
            <Tool label="调换起始跨" className="w-[70px]" />
            <Tool label="悬臂钢筋代号" />
          </div>
          <div className="min-h-0 flex-1 bg-white">
            <div className="h-full border-l-2 border-dotted border-[#bbb9aa]">
              <SteelTable />
            </div>
          </div>
        </div>
      </div>
    </div>
    <div className="w-[4px] shrink-0 bg-[#0a3cc4]" />
    <Browser />
  </div>
);

export default App;
